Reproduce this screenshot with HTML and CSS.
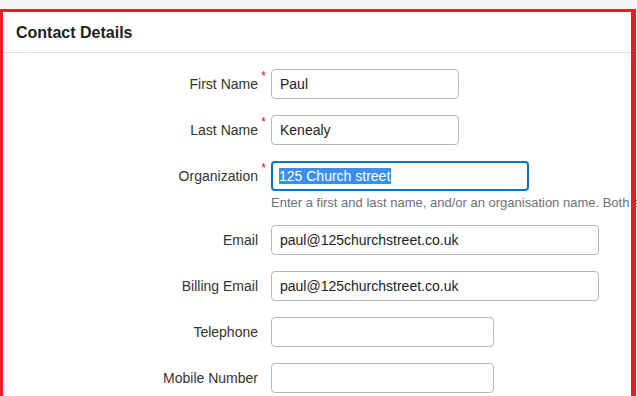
FILE: index.html
```html
<!DOCTYPE html>
<html>
<head>
<meta charset="utf-8">
<link rel="stylesheet" href="styles.css">
</head>
<body>
<div class="card">
  <div class="card-header">Contact Details</div>
  <div class="card-body">
    <div class="row">
      <label class="label">First Name<span class="req">*</span></label>
      <input class="input w-sm" type="text" value="Paul">
    </div>
    <div class="row">
      <label class="label">Last Name<span class="req">*</span></label>
      <input class="input w-sm" type="text" value="Kenealy">
    </div>
    <div class="row row-tight">
      <label class="label">Organization<span class="req">*</span></label>
      <div class="input input-focus w-md"><span class="sel">125 Church street</span></div>
    </div>
    <div class="help">Enter a first and last name, and/or an organisation name. Both are accepted</div>
    <div class="row">
      <label class="label">Email</label>
      <input class="input w-lg" type="text" value="paul@125churchstreet.co.uk">
    </div>
    <div class="row">
      <label class="label">Billing Email</label>
      <input class="input w-lg" type="text" value="paul@125churchstreet.co.uk">
    </div>
    <div class="row">
      <label class="label">Telephone</label>
      <input class="input w-ph" type="text" value="">
    </div>
    <div class="row">
      <label class="label">Mobile Number</label>
      <input class="input w-ph" type="text" value="">
    </div>
  </div>
</div>
<div class="highlight-frame"></div>
</body>
</html>
```
FILE: styles.css
```css
* { box-sizing: border-box; }
html, body { margin: 0; padding: 0; }
body {
  background: #f3f4f6;
  padding-top: 9px;
  font-family: "Liberation Sans", Arial, sans-serif;
  font-size: 14px;
  color: #333;
  overflow: hidden;
  width: 637px;
  height: 396px;
  position: relative;
}
.card {
  background: #fff;
  width: 637px;
  min-height: 400px;
}
.card-header {
  height: 44px;
  padding: 4px 0 0 16px;
  display: flex;
  align-items: center;
  font-size: 16px;
  font-weight: bold;
  color: #1b1f23;
  border-bottom: 1px solid #dcdfe3;
}
.card-body {
  padding-top: 16px;
}
.row {
  display: flex;
  align-items: center;
  margin-bottom: 16px;
}
.row-tight { margin-bottom: 0; }
.label {
  position: relative;
  width: 258px;
  margin-right: 13px;
  text-align: right;
  color: #333;
}
.req {
  position: absolute;
  right: -8px;
  top: -7px;
  color: #d0102a;
  font-size: 12px;
}
.input {
  height: 30px;
  border: 1px solid #b4b8bd;
  border-radius: 4px;
  padding: 0 8px;
  font-family: "Liberation Sans", Arial, sans-serif;
  font-size: 14px;
  color: #222;
  background: #fff;
  outline: none;
}
.input-focus {
  border: 2px solid #0a74c6;
  padding: 0 7px;
  display: flex;
  align-items: center;
}
.sel {
  background: #3a8ef0;
  color: #fff;
  line-height: 16px;
  padding: 0 1px 0 0;
  margin-left: -1px;
}
.w-sm { width: 188px; }
.w-md { width: 258px; }
.w-lg { width: 328px; }
.w-ph { width: 223px; }
.help {
  margin: 2px 0 12px 271px;
  line-height: 20px;
  font-size: 13px;
  color: #6b7177;
  white-space: nowrap;
}
.highlight-frame {
  position: absolute;
  left: 0;
  top: 9px;
  width: 636px;
  height: 400px;
  border-top: 3px solid #ec1c24;
  border-left: 3px solid #ec1c24;
  border-right: 5px solid #ec1c24;
  pointer-events: none;
}
```
